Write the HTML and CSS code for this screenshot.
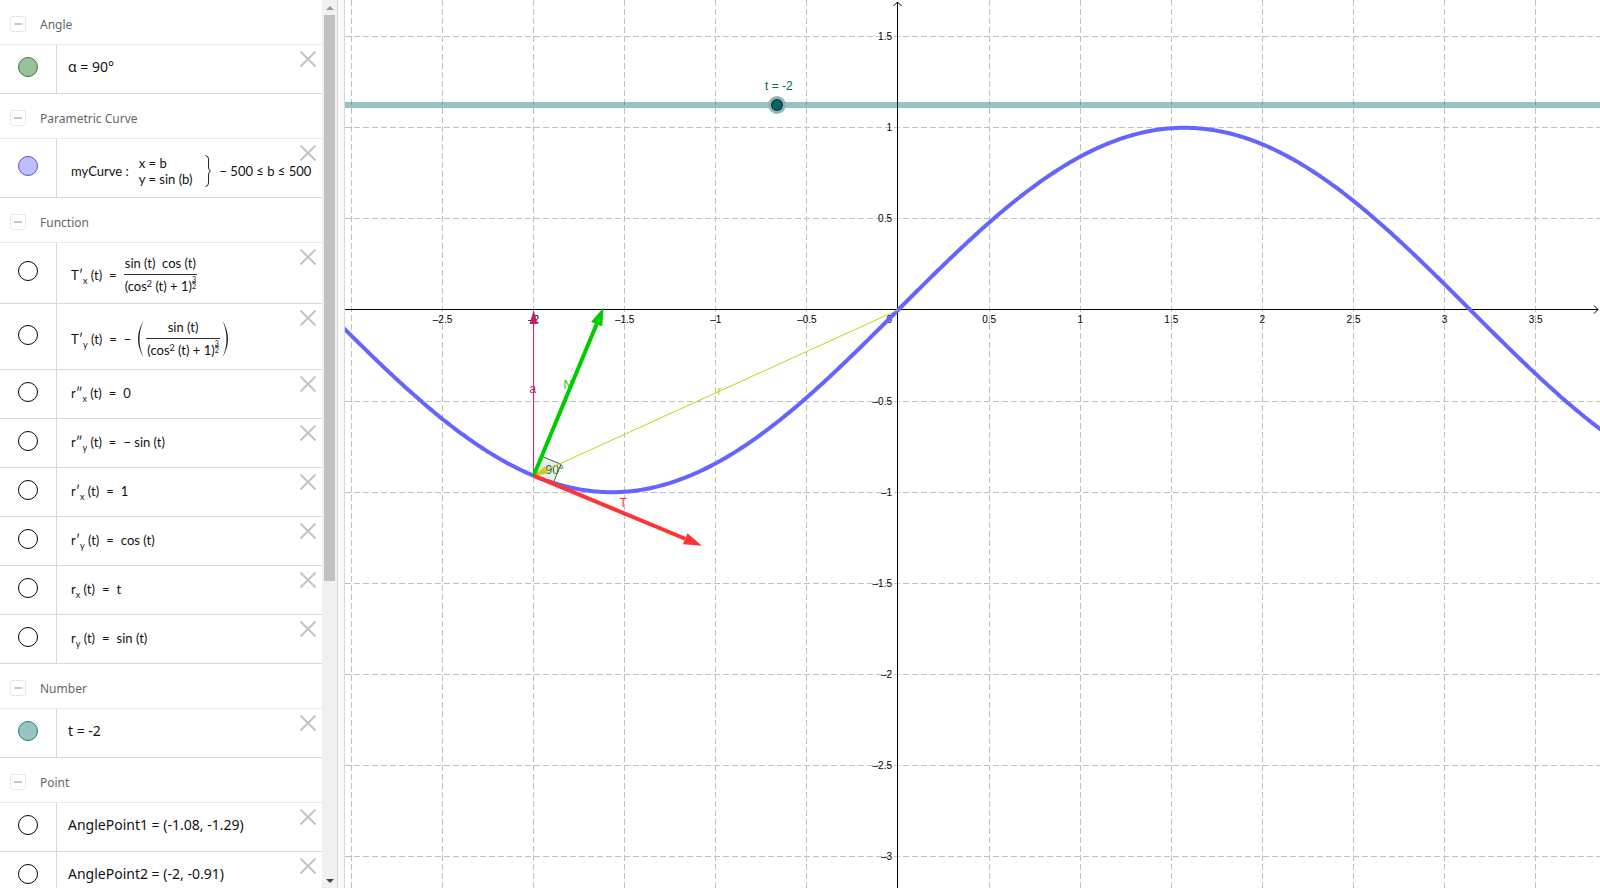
FILE: index.html
```
<!DOCTYPE html>
<html lang="en">
<head>
	<meta charset="utf-8">
	<title>Tangent and Normal Vectors</title>
	<link rel="stylesheet" href="styles.css">
</head>
<body>
	<svg class="defs" width="0" height="0">
		<symbol id="close" viewBox="0 0 16 16"><path d="M0.5 0.5L15.5 15.5M15.5 0.5L0.5 15.5"/></symbol>
		<symbol id="lparen" viewBox="0 0 7 38"><path d="M6.5 0.5Q-4.5 19 6.5 37.5Q-1.5 19 6.5 0.5Z"/></symbol>
		<symbol id="rparen" viewBox="0 0 7 38"><path d="M0.5 0.5Q11.5 19 0.5 37.5Q8.5 19 0.5 0.5Z"/></symbol>
	</svg>

	<div class="app">
		<aside class="algebra">
			<div class="list">
				<h2 class="group"><button class="fold" aria-label="Collapse Angle"></button>Angle</h2>
				<div class="row">
					<button class="marble green" aria-label="Show α"></button>
					<div class="value">α = 90°</div>
					<button class="close" aria-label="Delete"><svg><use href="#close"/></svg></button>
				</div>

				<h2 class="group"><button class="fold" aria-label="Collapse Parametric Curve"></button>Parametric Curve</h2>
				<div class="row curve">
					<button class="marble blue" aria-label="Show myCurve"></button>
					<div class="value math">
						<span class="name">myCurve :</span>
						<span class="system"><span>x = b</span><span>y = sin (b)</span></span>
						<svg class="brace" viewBox="0 0 6 32"><path d="M0.5 0.5Q3.5 1 3.5 4V12Q3.5 15.5 5.5 16Q3.5 16.5 3.5 20V28Q3.5 31 0.5 31.5"/></svg>
						<span>− 500 ≤ b ≤ 500</span>
					</div>
					<button class="close" aria-label="Delete"><svg><use href="#close"/></svg></button>
				</div>

				<h2 class="group"><button class="fold" aria-label="Collapse Function"></button>Function</h2>
				<div class="row tall">
					<button class="marble" aria-label="Show T'x"></button>
					<div class="value math">
						<span class="fn">T′<sub>x</sub> (t)</span><span class="eq">=</span>
						<span class="frac">
							<span class="top">sin (t)&nbsp; cos (t)</span>
							<span class="bottom"><span>(cos<sup>2</sup> (t) + 1)</span><span class="exp"><span>3</span><span>2</span></span></span>
						</span>
					</div>
					<button class="close" aria-label="Delete"><svg><use href="#close"/></svg></button>
				</div>
				<div class="row taller">
					<button class="marble" aria-label="Show T'y"></button>
					<div class="value math">
						<span class="fn">T′<sub>y</sub> (t)</span><span class="eq">=</span><span class="minus">−</span>
						<svg class="paren"><use href="#lparen"/></svg>
						<span class="frac">
							<span class="top">sin (t)</span>
							<span class="bottom"><span>(cos<sup>2</sup> (t) + 1)</span><span class="exp"><span>3</span><span>2</span></span></span>
						</span>
						<svg class="paren"><use href="#rparen"/></svg>
					</div>
					<button class="close" aria-label="Delete"><svg><use href="#close"/></svg></button>
				</div>
				<div class="row">
					<button class="marble" aria-label="Show r''x"></button>
					<div class="value math"><span class="fn">r″<sub>x</sub> (t)</span><span class="eq">=</span><span>0</span></div>
					<button class="close" aria-label="Delete"><svg><use href="#close"/></svg></button>
				</div>
				<div class="row">
					<button class="marble" aria-label="Show r''y"></button>
					<div class="value math"><span class="fn">r″<sub>y</sub> (t)</span><span class="eq">=</span><span>− sin (t)</span></div>
					<button class="close" aria-label="Delete"><svg><use href="#close"/></svg></button>
				</div>
				<div class="row">
					<button class="marble" aria-label="Show r'x"></button>
					<div class="value math"><span class="fn">r′<sub>x</sub> (t)</span><span class="eq">=</span><span>1</span></div>
					<button class="close" aria-label="Delete"><svg><use href="#close"/></svg></button>
				</div>
				<div class="row">
					<button class="marble" aria-label="Show r'y"></button>
					<div class="value math"><span class="fn">r′<sub>y</sub> (t)</span><span class="eq">=</span><span>cos (t)</span></div>
					<button class="close" aria-label="Delete"><svg><use href="#close"/></svg></button>
				</div>
				<div class="row">
					<button class="marble" aria-label="Show rx"></button>
					<div class="value math"><span class="fn">r<sub>x</sub> (t)</span><span class="eq">=</span><span>t</span></div>
					<button class="close" aria-label="Delete"><svg><use href="#close"/></svg></button>
				</div>
				<div class="row">
					<button class="marble" aria-label="Show ry"></button>
					<div class="value math"><span class="fn">r<sub>y</sub> (t)</span><span class="eq">=</span><span>sin (t)</span></div>
					<button class="close" aria-label="Delete"><svg><use href="#close"/></svg></button>
				</div>

				<h2 class="group"><button class="fold" aria-label="Collapse Number"></button>Number</h2>
				<div class="row">
					<button class="marble teal" aria-label="Show t"></button>
					<div class="value">t = -2</div>
					<button class="close" aria-label="Delete"><svg><use href="#close"/></svg></button>
				</div>

				<h2 class="group"><button class="fold" aria-label="Collapse Point"></button>Point</h2>
				<div class="row">
					<button class="marble" aria-label="Show AnglePoint1"></button>
					<div class="value">AnglePoint1 = (-1.08, -1.29)</div>
					<button class="close" aria-label="Delete"><svg><use href="#close"/></svg></button>
				</div>
				<div class="row">
					<button class="marble" aria-label="Show AnglePoint2"></button>
					<div class="value">AnglePoint2 = (-2, -0.91)</div>
					<button class="close" aria-label="Delete"><svg><use href="#close"/></svg></button>
				</div>
			</div>
			<div class="scrollbar">
				<button class="arrow up" aria-label="Scroll up"></button>
				<div class="track"><div class="thumb"></div></div>
				<button class="arrow down" aria-label="Scroll down"></button>
			</div>
		</aside>
		<div class="splitter"></div>
		<main class="graphics">
			<svg id="plot" class="plot"></svg>
			<label class="slider-label" for="t">t = -2</label>
			<input class="slider" id="t" type="range" min="-5" max="5" step="0.1" value="-2">
		</main>
	</div>

	<script src="plot.js"></script>
</body>
</html>
```
FILE: styles.css
```
body{
	margin: 0;
	overflow: hidden;
	background-color: #fff;
	font-family: "Noto Sans", sans-serif;
}
button{
	padding: 0;
	border: 0;
	background: none;
	cursor: pointer;
}
.defs{
	position: absolute;
}
.app{
	display: flex;
	height: 100vh;
}

/* algebra view */
.algebra{
	display: flex;
	flex: none;
	width: 337px;
}
.list{
	flex: 1;
	overflow: hidden;
}
.group{
	display: flex;
	align-items: center;
	box-sizing: border-box;
	height: 45px;
	margin: 0;
	padding: 4px 0 0 10px;
	gap: 14px;
	border-bottom: 1px solid #e6e9e9;
	color: #666;
	font-size: 12px;
	font-weight: normal;
}
.fold{
	display: flex;
	align-items: center;
	justify-content: center;
	width: 16px;
	height: 16px;
	border: 1px solid #e6e9e9;
	border-radius: 3px;
}
.fold::before{
	content: "";
	width: 8px;
	height: 2px;
	background-color: #c4c8c8;
}
.row{
	display: flex;
	box-sizing: border-box;
	height: 49px;
	border-bottom: 1px solid #d8d8d8;
}
.row.curve{
	height: 59px;
}
.row.tall{
	height: 61px;
}
.row.taller{
	height: 66px;
}
.marble{
	box-sizing: border-box;
	align-self: center;
	width: 20px;
	height: 20px;
	margin: 0 18px 4px 18px;
	border: 1px solid #000;
	border-radius: 50%;
}
.green{
	background-color: #99c199;
	border-color: #2f7f3a;
}
.blue{
	background-color: #bfbfff;
	border-color: #5a50d0;
}
.teal{
	background-color: #99c2c2;
	border-color: #1f7f74;
}
.value{
	display: flex;
	align-items: center;
	flex: 1;
	padding: 0 0 6px 11px;
	border-left: 1px solid #d8d8d8;
	font-size: 14px;
	color: #111;
	white-space: nowrap;
}
.close{
	align-self: flex-start;
	width: 16px;
	height: 16px;
	margin: 6px 6px 0 -16px;
}
.close svg{
	display: block;
	width: 16px;
	height: 16px;
	fill: none;
	stroke: #c4c4c4;
	stroke-width: 2;
}

/* formulas */
.math{
	padding: 0 0 2px 14px;
	font-family: Lato, sans-serif;
	font-size: 13px;
	line-height: 16px;
}
.curve .value{
	padding: 6px 0 0 14px;
}
.tall .value, .taller .value{
	padding: 4px 0 0 14px;
}
.math sub, .math sup{
	font-size: 9px;
	line-height: 0;
}
.eq{
	margin: 0 7px;
}
.minus{
	margin-right: 4px;
}
.system{
	display: flex;
	flex-direction: column;
	margin: 0 12px 0 10px;
}
.brace{
	width: 6px;
	height: 32px;
	margin-right: 9px;
	fill: none;
	stroke: #222;
}
.frac{
	display: flex;
	flex-direction: column;
	text-align: center;
}
.top{
	border-bottom: 1px solid #333;
	line-height: 21px;
}
.bottom{
	display: flex;
	padding: 0 1px;
	line-height: 22px;
}
.bottom sup{
	vertical-align: 4px;
}
.exp{
	display: flex;
	flex-direction: column;
	align-self: flex-start;
	font-size: 7px;
	line-height: 6px;
	margin-top: 1px;
}
.exp span:first-child{
	border-bottom: 1px solid #555;
}
.paren{
	width: 7px;
	height: 38px;
	margin: 0 2px;
	fill: #222;
}

/* scrollbar */
.scrollbar{
	display: flex;
	flex-direction: column;
	width: 15px;
	background-color: #f0f0f0;
}
.arrow{
	display: flex;
	align-items: center;
	justify-content: center;
	height: 15px;
}
.arrow::before{
	content: "";
	border: 4px solid transparent;
}
.up::before{
	border-top: 0;
	border-bottom-color: #999;
}
.down::before{
	border-bottom: 0;
	border-top-color: #444;
}
.track{
	flex: 1;
}
.thumb{
	height: 66%;
	margin: 0 2px;
	background-color: #c1c1c1;
}
.splitter{
	flex: none;
	width: 6px;
	border: solid #d8d8d8;
	border-width: 0 1px;
	background-color: #fafafa;
	cursor: col-resize;
}

/* graphics view */
.graphics{
	position: relative;
	flex: 1;
	overflow: hidden;
}
.plot{
	display: block;
	width: 100%;
	height: 100%;
	font-family: "Liberation Sans", Arial, sans-serif;
}
.grid{
	stroke: #c0c0c0;
	stroke-dasharray: 6 3;
}
.axis{
	fill: none;
	stroke: #000;
}
.tick{
	font-size: 10px;
	fill: #000;
}
.label{
	font-size: 12px;
}
.sine{
	fill: none;
	stroke: #6464ff;
	stroke-width: 4;
}
.angle{
	fill: #064;
	fill-opacity: 0.1;
	stroke: #2f6f3a;
}
.slider-label{
	position: absolute;
	left: 420px;
	top: 79px;
	font: 12px/14px "Liberation Sans", Arial, sans-serif;
	color: #066;
}
.slider{
	position: absolute;
	left: 0;
	top: 96px;
	width: 1427px;
	height: 18px;
	margin: 0;
	appearance: none;
	background: linear-gradient(rgba(0,102,102,0.4), rgba(0,102,102,0.4)) center / 100% 6px no-repeat;
}
.slider::-webkit-slider-thumb{
	appearance: none;
	box-sizing: border-box;
	width: 18px;
	height: 18px;
	border: 3px solid #8fb5b5;
	border-radius: 50%;
	background-color: #066;
	box-shadow: inset 0 0 0 1px #222;
}
```
FILE: plot.js
```
var plot = document.getElementById("plot");
var NS = "http://www.w3.org/2000/svg";
var W = plot.clientWidth;
var H = plot.clientHeight;
var OX = 553;
var OY = 310;
var UNIT = 182.2;
var t = -2;

function px(x){ return OX + x * UNIT; }
function py(y){ return OY - y * UNIT; }

function add(tag, attrs, text){
	var el = document.createElementNS(NS, tag);
	for (var k in attrs) el.setAttribute(k, attrs[k]);
	if (text) el.textContent = text;
	plot.appendChild(el);
}
function line(x1, y1, x2, y2, cls){
	add("line", {x1: x1, y1: y1, x2: x2, y2: y2, "class": cls});
}
function vector(x1, y1, x2, y2, color, width, len, half){
	var d = Math.hypot(x2 - x1, y2 - y1);
	var ux = (x2 - x1) / d;
	var uy = (y2 - y1) / d;
	var bx = x2 - ux * len;
	var by = y2 - uy * len;
	add("line", {x1: x1, y1: y1, x2: bx, y2: by, stroke: color, "stroke-width": width});
	add("polygon", {
		points: [x2, y2, bx - uy * half, by + ux * half, bx + uy * half, by - ux * half].join(" "),
		fill: color
	});
}
function label(x, y, text, color){
	add("text", {x: x, y: y, "class": "label", fill: color}, text);
}

// grid
var i, p;
for (i = -6; px(i / 2) < W; i++){
	p = Math.floor(px(i / 2)) + 0.5;
	if (i != 0) line(p, 0, p, H, "grid");
}
for (i = 3; py(i / 2) < H; i--){
	p = Math.floor(py(i / 2)) + 0.5;
	if (i != 0) line(0, p, W, p, "grid");
}

// axes, kept on whole pixels
var ax = OX - 0.5;
var ay = OY - 0.5;
add("path", {d: "M0 " + ay + "H" + (W - 2) + "m-4 -4l4 4l-4 4", "class": "axis"});
add("path", {d: "M" + ax + " " + H + "V2m-4 4l4 -4l4 4", "class": "axis"});

// numbers on the axes
for (i = -5; px(i / 2) < W - 20; i++){
	if (i != 0) add("text", {x: px(i / 2), y: 323, "class": "tick", "text-anchor": "middle"}, String(i / 2).replace("-", "–"));
}
add("text", {x: OX - 6, y: 323, "class": "tick", "text-anchor": "end"}, "0");
for (i = 3; py(i / 2) < H; i--){
	if (i != 0) add("text", {x: OX - 6, y: Math.floor(py(i / 2)) + 4, "class": "tick", "text-anchor": "end"}, String(i / 2).replace("-", "–"));
}

// curve
var d = "";
for (p = -4; p <= W + 4; p += 2){
	d += (d ? "L" : "M") + p + " " + py(Math.sin((p - OX) / UNIT)).toFixed(2);
}
add("path", {d: d, "class": "sine"});

var x = px(t);
var y = py(Math.sin(t));
var n = Math.hypot(1, Math.cos(t));
var tx = 1 / n;
var ty = -Math.cos(t) / n;
var s = 21;
add("polygon", {
	points: [x, y, x + tx * s, y + ty * s, x + (tx + ty) * s, y + (ty - tx) * s, x + ty * s, y - tx * s].join(" "),
	"class": "angle"
});
label(x + 12, y - 2, "90°", "#2f5f3a");
vector(OX, OY, x, y, "#cccc1a", 1, 14, 4);
vector(x, y, x, OY, "#cc1a66", 1, 14, 4);
vector(x, y, x + ty * UNIT, y - tx * UNIT, "#00cc00", 4, 18, 6);
vector(x, y, x + tx * UNIT, y + ty * UNIT, "#ff3333", 4, 18, 6);
label(x - 4, 393, "a", "#cc1a66");
label(x + 30, 389, "N", "#00cc00");
label(x + 184, 395, "r", "#cccc1a");
label(x + 86, 507, "T", "#ff3333");
```
